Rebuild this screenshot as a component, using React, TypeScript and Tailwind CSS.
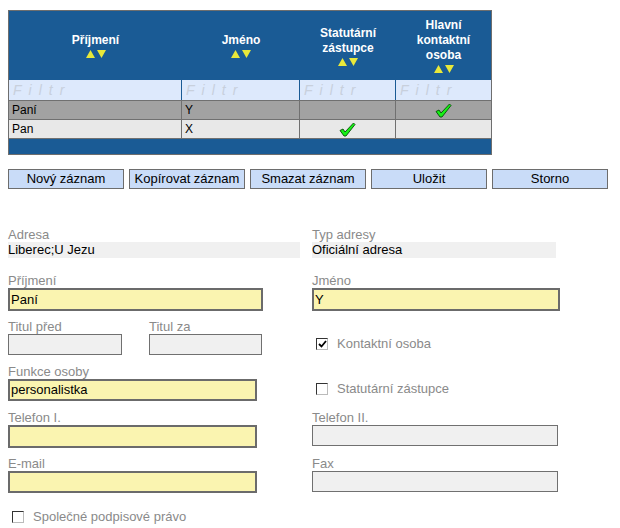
import React from "react";

const Arrows = () => (
  <div className="flex justify-center gap-[2px] mt-[2px]">
    <svg width="9" height="8" viewBox="0 0 9 8"><polygon points="4.5,0 9,8 0,8" fill="#e8e83a" /></svg>
    <svg width="9" height="8" viewBox="0 0 9 8"><polygon points="0,0 9,0 4.5,8" fill="#e8e83a" /></svg>
  </div>
);

const Check = () => (
  <svg width="17" height="15" viewBox="0 0 17 15">
    <path d="M1 8.5 L4 7 L6 10 L14.5 1 L16 2.5 L7 14 L5 14 Z" fill="#16f016" stroke="#064d06" strokeWidth="0.9" />
  </svg>
);

const Hdr = ({ lines, w }: { lines: string[]; w: string }) => (
  <div className={`${w} flex flex-col items-center justify-center text-white font-bold text-[12px] leading-[15px]`}>
    {lines.map((l) => (
      <div key={l}>{l}</div>
    ))}
    <Arrows />
  </div>
);

const Filter = ({ w, last }: { w: string; last?: boolean }) => (
  <div className={`${w} ${last ? "" : "border-r border-[#1a5b95]"} h-full flex items-center pl-[4px] italic text-[14px] tracking-[7px] text-[#c8d0dc]`}>
    Filtr
  </div>
);

const Cell = ({ w, last, children, center }: { w: string; last?: boolean; children?: React.ReactNode; center?: boolean }) => (
  <div className={`${w} ${last ? "" : "border-r border-[#707070]"} h-full flex items-center ${center ? "justify-center" : "pl-[3px]"} text-[12px] text-black`}>
    {children}
  </div>
);

const Btn = ({ label }: { label: string }) => (
  <div className="w-[116px] h-[20px] border border-[#6d6d6d] bg-[#c9dcf8] flex items-center justify-center text-[13px] text-black">
    {label}
  </div>
);

const Label = ({ children }: { children: React.ReactNode }) => (
  <div className="h-[14px] leading-[14px] text-[13px] text-[#8a8a8a]">{children}</div>
);

const YInput = ({ w, h, value }: { w: string; h: string; value?: string }) => (
  <div className={`${w} ${h} border-2 border-[#6b6b6b] bg-[#faf4b0] flex items-center pl-[1px] text-[13px] text-black`}>
    {value}
  </div>
);

const GInput = ({ w, h }: { w: string; h: string }) => (
  <div className={`${w} ${h} border border-[#707070] bg-[#f0f0f0]`} />
);

const CheckBox = ({ checked, label }: { checked?: boolean; label: string }) => (
  <div className="flex items-center">
    <div className="w-[12px] h-[12px] border border-[#333] border-r-[#bbb] border-b-[#bbb] bg-white flex items-center justify-center ml-[4px]">
      {checked && (
        <svg width="9" height="8" viewBox="0 0 9 8">
          <path d="M1 4 L3.5 6.5 L8 1" stroke="#000" strokeWidth="1.8" fill="none" />
        </svg>
      )}
    </div>
    <span className="ml-[9px] text-[13px] text-[#8a8a8a] leading-[14px]">{label}</span>
  </div>
);

export default function App() {
  return (
    <div className="w-[620px] h-[528px] bg-white relative overflow-hidden" style={{ fontFamily: '"Liberation Sans", Arial, sans-serif' }}>
      <div className="pl-[8px] pt-[10px]">
        <div className="w-[484px] border border-[#6e6e6e] bg-[#1a5b95]">
          <div className="h-[69px] flex">
            <Hdr lines={["Příjmení"]} w="w-[173px]" />
            <Hdr lines={["Jméno"]} w="w-[118px]" />
            <Hdr lines={["Statutární", "zástupce"]} w="w-[96px]" />
            <Hdr lines={["Hlavní", "kontaktní", "osoba"]} w="w-[95px]" />
          </div>
          <div className="h-[21px] flex bg-[#dde9fc] border-b border-[#707070]">
            <Filter w="w-[173px]" />
            <Filter w="w-[118px]" />
            <Filter w="w-[96px]" />
            <Filter w="w-[95px]" last />
          </div>
          <div className="h-[19px] flex bg-[#a2a2a2] border-b border-[#707070]">
            <Cell w="w-[173px]">Paní</Cell>
            <Cell w="w-[118px]">Y</Cell>
            <Cell w="w-[96px]" />
            <Cell w="w-[95px]" last center>
              <Check />
            </Cell>
          </div>
          <div className="h-[19px] flex bg-[#e8e8e8] border-b border-[#707070]">
            <Cell w="w-[173px]">Pan</Cell>
            <Cell w="w-[118px]">X</Cell>
            <Cell w="w-[96px]" center>
              <Check />
            </Cell>
            <Cell w="w-[95px]" last />
          </div>
          <div className="h-[15px]" />
        </div>
      </div>

      <div className="pl-[8px] mt-[14px] flex gap-[5px]">
        <Btn label="Nový záznam" />
        <Btn label="Kopírovat záznam" />
        <Btn label="Smazat záznam" />
        <Btn label="Uložit" />
        <Btn label="Storno" />
      </div>

      <div className="pl-[8px] mt-[39px] flex flex-col">
        <div className="flex">
          <div className="w-[304px]">
            <Label>Adresa</Label>
            <div className="w-[292px] h-[16px] bg-[#f0f0f0] text-[13px] leading-[16px] text-black">Liberec;U Jezu</div>
          </div>
          <div>
            <Label>Typ adresy</Label>
            <div className="w-[244px] h-[16px] bg-[#f0f0f0] text-[13px] leading-[16px] text-black">Oficiální adresa</div>
          </div>
        </div>
        <div className="flex mt-[16px]">
          <div className="w-[304px]">
            <Label>Příjmení</Label>
            <YInput w="w-[255px]" h="h-[23px]" value="Paní" />
          </div>
          <div>
            <Label>Jméno</Label>
            <YInput w="w-[248px]" h="h-[23px]" value="Y" />
          </div>
        </div>
        <div className="flex mt-[9px]">
          <div className="w-[304px] flex">
            <div className="w-[141px]">
              <Label>Titul před</Label>
              <GInput w="w-[114px]" h="h-[21px]" />
            </div>
            <div>
              <Label>Titul za</Label>
              <GInput w="w-[113px]" h="h-[21px]" />
            </div>
          </div>
          <div className="pt-[17px]">
            <CheckBox checked label="Kontaktní osoba" />
          </div>
        </div>
        <div className="flex mt-[10px]">
          <div className="w-[304px]">
            <Label>Funkce osoby</Label>
            <YInput w="w-[249px]" h="h-[22px]" value="personalistka" />
          </div>
          <div className="pt-[17px]">
            <CheckBox label="Statutární zástupce" />
          </div>
        </div>
        <div className="flex mt-[10px]">
          <div className="w-[304px]">
            <Label>Telefon I.</Label>
            <YInput w="w-[249px]" h="h-[23px]" />
          </div>
          <div>
            <Label>Telefon II.</Label>
            <GInput w="w-[246px]" h="h-[21px]" />
          </div>
        </div>
        <div className="flex mt-[9px]">
          <div className="w-[304px]">
            <Label>E-mail</Label>
            <YInput w="w-[249px]" h="h-[22px]" />
          </div>
          <div>
            <Label>Fax</Label>
            <GInput w="w-[246px]" h="h-[21px]" />
          </div>
        </div>
        <div className="mt-[17px]">
          <CheckBox label="Společné podpisové právo" />
        </div>
      </div>
    </div>
  );
}
